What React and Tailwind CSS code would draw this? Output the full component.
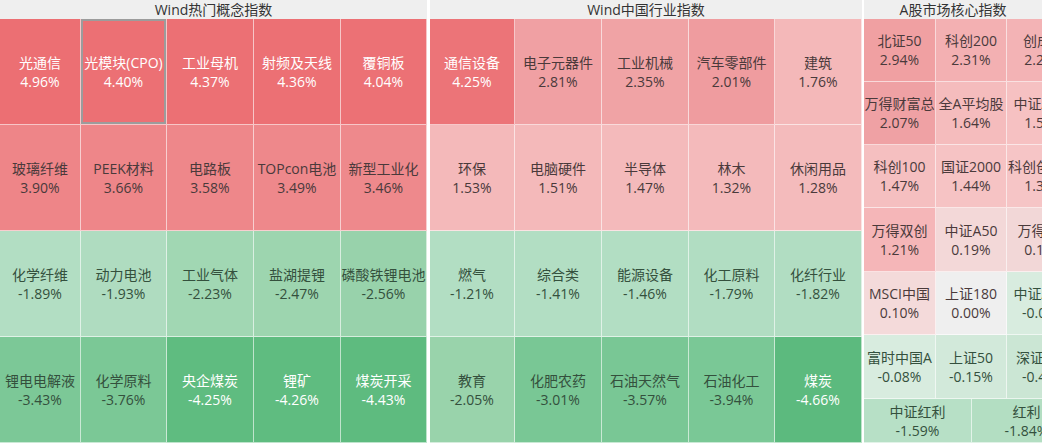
import React from "react";

const concept = [
  [
    ["光通信", "4.96%", "#ec6f73", true],
    ["光模块(CPO)", "4.40%", "#ec7074", true, true],
    ["工业母机", "4.37%", "#ec7074", true],
    ["射频及天线", "4.36%", "#ec7074", true],
    ["覆铜板", "4.04%", "#ec7175", true],
  ],
  [
    ["玻璃纤维", "3.90%", "#ee8588"],
    ["PEEK材料", "3.66%", "#ee8689"],
    ["电路板", "3.58%", "#ee878a"],
    ["TOPcon电池", "3.49%", "#ee888b"],
    ["新型工业化", "3.46%", "#ee898c"],
  ],
  [
    ["化学纤维", "-1.89%", "#b2dec3"],
    ["动力电池", "-1.93%", "#afdcc0"],
    ["工业气体", "-2.23%", "#a1d7b3"],
    ["盐湖提锂", "-2.47%", "#9dd5af"],
    ["磷酸铁锂电池", "-2.56%", "#98d2ab"],
  ],
  [
    ["锂电电解液", "-3.43%", "#7cc897"],
    ["化学原料", "-3.76%", "#7bc896"],
    ["央企煤炭", "-4.25%", "#5fbc80", true],
    ["锂矿", "-4.26%", "#5fbc80", true],
    ["煤炭开采", "-4.43%", "#5ebb7f", true],
  ],
];

const industry = [
  [
    ["通信设备", "4.25%", "#ec7478", true],
    ["电子元器件", "2.81%", "#f0a0a3"],
    ["工业机械", "2.35%", "#f0a3a5"],
    ["汽车零部件", "2.01%", "#ef9c9f"],
    ["建筑", "1.76%", "#f4b8b9"],
  ],
  [
    ["环保", "1.53%", "#f4b9ba"],
    ["电脑硬件", "1.51%", "#f4b9ba"],
    ["半导体", "1.47%", "#f4babb"],
    ["林木", "1.32%", "#f4babb"],
    ["休闲用品", "1.28%", "#f4bbbc"],
  ],
  [
    ["燃气", "-1.21%", "#b2dec3"],
    ["综合类", "-1.41%", "#b2dec3"],
    ["能源设备", "-1.46%", "#b2dec3"],
    ["化工原料", "-1.79%", "#b1ddc2"],
    ["化纤行业", "-1.82%", "#b1ddc2"],
  ],
  [
    ["教育", "-2.05%", "#99d3ab"],
    ["化肥农药", "-3.01%", "#79c795"],
    ["石油天然气", "-3.57%", "#79c795"],
    ["石油化工", "-3.94%", "#7ac896"],
    ["煤炭", "-4.66%", "#5cba7e", true],
  ],
];

const core = [
  [
    ["北证50", "2.94%", "#f0a0a2"],
    ["科创200", "2.31%", "#f3b0b2"],
    ["创成长", "2.25%", "#f3b3b5"],
  ],
  [
    ["万得财富总", "2.07%", "#efa1a4"],
    ["全A平均股", "1.64%", "#f5bcbd"],
    ["中证A500", "1.52%", "#f6c1c2"],
  ],
  [
    ["科创100", "1.47%", "#f5bfc0"],
    ["国证2000", "1.44%", "#f6c3c4"],
    ["科创创业50", "1.36%", "#f6c5c6"],
  ],
  [
    ["万得双创", "1.21%", "#f5b6b8"],
    ["中证A50", "0.19%", "#f3d8d8"],
    ["万得A50", "0.15%", "#f2d7d7"],
  ],
  [
    ["MSCI中国", "0.10%", "#f4dada"],
    ["上证180", "0.00%", "#efefef"],
    ["中证A100", "-0.03%", "#d8ecdf"],
  ],
  [
    ["富时中国A", "-0.08%", "#d8ecdf"],
    ["上证50", "-0.15%", "#d2e9da"],
    ["深证成指", "-0.45%", "#cbe6d4"],
  ],
];

const coreHeights = ["h-[63px]", "h-[63px]", "h-[63px]", "h-[64px]", "h-[63px]", "h-[64px]"];
const coreWidths = ["w-[72px]", "w-[71px]", "w-[75px]"];

const leftCols = ["w-[81px]", "w-[86px]", "w-[87px]", "w-[87px]", "w-[86px]"];
const midCols = ["w-[85px]", "w-[87px]", "w-[87px]", "w-[86px]", "w-[87px]"];

function Cell({ item, className }) {
  const [name, pct, color, light, selected] = item;
  const green = pct.startsWith("-");
  const tone = light ? "text-white" : green ? "text-[#34503d]" : "text-[#4a3a3b]";
  return (
    <div
      className={`${className} shrink-0 flex flex-col items-center justify-center border-r border-b border-white/60 whitespace-nowrap overflow-hidden text-[14px] leading-[19px] ${tone} ${
        selected ? "shadow-[inset_0_0_0_2px_#9c9c9c]" : ""
      }`}
      style={{ backgroundColor: color }}
    >
      <span>{name}</span>
      <span>{pct}</span>
    </div>
  );
}

function Header({ title }) {
  return (
    <div className="h-[19px] bg-[#efefef] text-center text-[14px] leading-[19px] text-[#333] whitespace-nowrap">
      {title}
    </div>
  );
}

function Board({ title, rows, cols, width }) {
  return (
    <div className={`${width} shrink-0 flex flex-col`}>
      <Header title={title} />
      {rows.map((row, i) => (
        <div key={i} className="flex h-[106px]">
          {row.map((item, j) => (
            <Cell key={j} item={item} className={`${cols[j]} h-full`} />
          ))}
        </div>
      ))}
    </div>
  );
}

export default function App() {
  return (
    <div className="w-[1042px] h-[443px] overflow-hidden bg-white flex font-['Open_Sans','Noto_Sans_CJK_SC',sans-serif]">
      <Board title="Wind热门概念指数" rows={concept} cols={leftCols} width="w-[427px]" />
      <div className="w-[3px] shrink-0 bg-white" />
      <Board title="Wind中国行业指数" rows={industry} cols={midCols} width="w-[432px]" />
      <div className="w-[2px] shrink-0 bg-white" />
      <div className="w-[218px] shrink-0 flex flex-col">
        <div className="w-[178px]">
          <Header title="A股市场核心指数" />
        </div>
        {core.map((row, i) => (
          <div key={i} className={`flex ${coreHeights[i]}`}>
            {row.map((item, j) => (
              <Cell key={j} item={item} className={`${coreWidths[j]} h-full`} />
            ))}
          </div>
        ))}
        <div className="flex h-[44px]">
          <Cell item={["中证红利", "-1.59%", "#b7e0c6"]} className="w-[108px] h-full" />
          <Cell item={["红利", "-1.84%", "#b3dec2"]} className="w-[110px] h-full" />
        </div>
      </div>
    </div>
  );
}
